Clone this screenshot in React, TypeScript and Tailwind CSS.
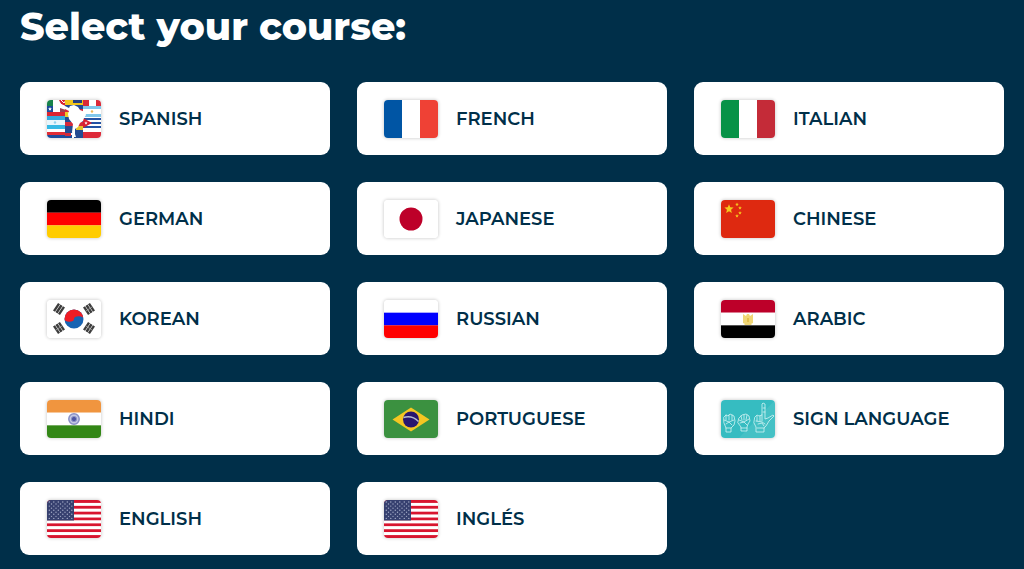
import React from 'react';

const Stripes = ({ colors, vertical }: { colors: string[]; vertical?: boolean }) => {
  const size = (vertical ? 54 : 38) / colors.length;
  return (
    <>
      {colors.map((color, i) =>
        vertical ? (
          <rect key={i} x={i * size} width={size + 0.1} height="38" fill={color} />
        ) : (
          <rect key={i} y={i * size} width="54" height={size + 0.1} fill={color} />
        )
      )}
    </>
  );
};

const starPoints = (cx: number, cy: number, r: number) =>
  Array.from({ length: 10 }, (_, i) => {
    const radius = i % 2 === 0 ? r : r * 0.45;
    const angle = (Math.PI * i) / 5 - Math.PI / 2;
    return `${cx + radius * Math.cos(angle)},${cy + radius * Math.sin(angle)}`;
  }).join(' ');

const LatinAmerica = () => (
  <>
    <rect width="54" height="38" fill="#fff" />
    {/* Mexico, Chile, Dominican Republic */}
    <rect width="6" height="6" fill="#17834b" />
    <rect y="6" width="6" height="6" fill="#1c4c9c" />
    <polygon points={starPoints(3, 9, 2)} fill="#fff" />
    <path d="M12 0h7v6l-4-1-3-3z" fill="#d92231" />
    <path d="M14 0l3 3 2-3M13 4l4 2" stroke="#fff" strokeWidth="1" fill="none" />
    <path d="M13 8l6 2v2h-6z" fill="#9a4352" />
    {/* Central America */}
    <rect y="12" width="19" height="4" fill="#da2532" />
    <rect y="16" width="19" height="4" fill="#35a9df" />
    <rect y="20" width="19" height="5" fill="#e8f6fc" />
    <rect y="25" width="19" height="4" fill="#35b9e5" />
    <rect y="29" width="19" height="3" fill="#fff" />
    <rect y="32" width="19" height="3" fill="#e02c35" />
    <rect y="35" width="25" height="3" fill="#1c4c9c" />
    <circle cx="8" cy="22.500" r="1.200" fill="#8fd1ee" />
    {/* Colombia, Venezuela, Ecuador */}
    <rect x="18" width="18" height="6" fill="#f2c51d" />
    <rect x="26" width="9" height="3" fill="#243f82" />
    <rect x="18" y="5" width="18" height="4" fill="#234a97" />
    <rect x="18" y="9" width="18" height="3" fill="#d5283b" />
    <rect x="18" y="12" width="18" height="5" fill="#edcb29" />
    <rect x="18" y="17" width="18" height="5" fill="#244b91" />
    <rect x="18" y="22" width="18" height="4" fill="#d32a3b" />
    <rect x="18" y="26" width="18" height="7" fill="#244b91" />
    <rect x="29" y="26" width="7" height="4" fill="#e3c42d" />
    <rect x="27" y="31" width="9" height="7" fill="#244b91" />
    <rect x="18" y="33" width="6" height="3" fill="#d32a3b" />
    {/* Peru, Argentina, Cuba, Uruguay */}
    <rect x="36" width="6" height="6" fill="#db2938" />
    <rect x="49" width="5" height="6" fill="#db2938" />
    <rect x="36" y="6" width="18" height="3" fill="#80c7eb" />
    <rect x="36" y="14" width="18" height="3" fill="#80c7eb" />
    <circle cx="45" cy="11.500" r="1.200" fill="#e9b657" />
    <path d="M36 19h18M36 23h18M36 27h18" stroke="#2453a4" strokeWidth="2" />
    <rect x="36" y="32" width="18" height="6" fill="#dd2938" />
    <path d="M36 18l9 5-9 5z" fill="#d81f32" />
    <polygon points={starPoints(39, 23, 1.7)} fill="#fff" />
    {/* continent */}
    <polygon
      points="6,0 12,0 14,4 18,6 22,8 23,6 27,5 31,7 33,10 38,12 39,15 37,18 36,21 33,23 31,27 28,29 28,34 29,37 26,37 25,32 26,24 22,19 21,14 22,11 18,9 13,6"
      fill="#fff"
    />
  </>
);

const Korea = () => (
  <>
    <rect width="54" height="38" fill="#fff" />
    <g transform="translate(27 19)">
      <circle r="9.500" fill="#1763b2" />
      <path d="M-9.500 0A9.500 9.500 0 0 1 9.500 0A4.750 2.800 0 0 0 0 0A4.750 2.800 0 0 1 -9.500 0z" fill="#ee1c25" />
    </g>
    {[
      [12, 9, -56],
      [42, 9, 56],
      [12, 28, 56],
      [42, 28, -56],
    ].map(([x, y, angle], i) => (
      <g key={i} transform={`translate(${x} ${y}) rotate(${angle})`} stroke="#3d3d3d" strokeWidth="2.400">
        <path d="M-4.500 -3h9M-4.500 0h9M-4.500 3h9" />
        {i > 0 && <path d="M0 -4v8" stroke="#aaa" strokeWidth="0.700" />}
      </g>
    ))}
  </>
);

const Hands = () => (
  <>
    <rect width="54" height="38" fill="#36bcc1" />
    <path d="M54 0v38H18z" fill="#fff" opacity="0.080" />
    <g fill="none" stroke="#d3f4f4" strokeWidth="0.800" strokeLinejoin="round" strokeLinecap="round">
      <path d="M3 17l2-2 2 1 2-2 2 1 2 1 1 5-1 4-3 3v4H5v-4l-2-5zM5 15v5M8 15v5M11 15v5M3 20l5 2 5-2M5 24l3-2 3 3M5 28h5" />
      <path d="M18 18l3-3 4-1 3 2 1 5-2 3-1 3v4h-6v-4l-3-4zM20 16l1 4M23 15v5M26 15l-1 5M18 20l5 2 5-3M19 23l4-1 3 3M20 28h6" />
      <path d="M34 17l2-2 2 1 3-1V4l1-1 2 1 0 15 3-1 5-3 1 1-5 5-3 5-2 2v4h-8v-5l-2-4zM36 16v5M39 16v5M41 15v6M35 21l6 1 3 2M37 24l4-1 2 3M36 28h7M42 8h2M42 12h2" />
    </g>
  </>
);

const Usa = () => (
  <>
    <Stripes colors={Array.from({ length: 13 }, (_, i) => (i % 2 === 0 ? '#d8152f' : '#fff'))} />
    <rect width="27" height="20.500" fill="#36406f" />
    {Array.from({ length: 9 }, (_, row) =>
      Array.from({ length: row % 2 === 0 ? 6 : 5 }, (_, col) => (
        <circle
          key={`${row}-${col}`}
          cx={(row % 2 === 0 ? 2.3 : 4.5) + col * 4.5}
          cy={2 + row * 2.05}
          r="0.700"
          fill="#a3aac6"
        />
      ))
    )}
  </>
);

const courses: { name: string; flag: React.ReactNode }[] = [
  { name: 'SPANISH', flag: <LatinAmerica /> },
  { name: 'FRENCH', flag: <Stripes vertical colors={['#0055a4', '#fff', '#ef4135']} /> },
  { name: 'ITALIAN', flag: <Stripes vertical colors={['#079247', '#fff', '#c42b38']} /> },
  { name: 'GERMAN', flag: <Stripes colors={['#000', '#f00', '#fc0']} /> },
  {
    name: 'JAPANESE',
    flag: (
      <>
        <rect width="54" height="38" fill="#fff" />
        <circle cx="27" cy="19" r="11.500" fill="#bd0029" />
      </>
    ),
  },
  {
    name: 'CHINESE',
    flag: (
      <>
        <rect width="54" height="38" fill="#de2910" />
        <g fill="#f6c71e">
          <polygon points={starPoints(8, 9, 4.8)} />
          <polygon points={starPoints(16, 4.5, 1.9)} />
          <polygon points={starPoints(19, 8, 1.9)} />
          <polygon points={starPoints(19, 13, 1.9)} />
          <polygon points={starPoints(16, 16, 1.9)} />
        </g>
      </>
    ),
  },
  { name: 'KOREAN', flag: <Korea /> },
  { name: 'RUSSIAN', flag: <Stripes colors={['#fff', '#00f', '#f00']} /> },
  {
    name: 'ARABIC',
    flag: (
      <>
        <Stripes colors={['#bd0029', '#fff', '#000']} />
        <path d="M22 14l3 2 1-2h2l1 2 3-2v9l-2 1 1 1h-8l1-1-2-1z" fill="#f0d676" />
        <path d="M26 18h2v4h-2z" fill="#e3bf4c" />
      </>
    ),
  },
  {
    name: 'HINDI',
    flag: (
      <>
        <Stripes colors={['#f0953f', '#fff', '#338716']} />
        <circle cx="27" cy="19" r="5.200" fill="#c3c8e3" stroke="#8990c6" strokeWidth="1.500" />
        <circle cx="27" cy="19" r="2.600" fill="#4d56a3" stroke="#8c93c8" />
      </>
    ),
  },
  {
    name: 'PORTUGUESE',
    flag: (
      <>
        <rect width="54" height="38" fill="#3b9140" />
        <path d="M8.500 19.500L27 7.500 45.500 19.500 27 31.500z" fill="#f5c622" />
        <circle cx="27" cy="19.500" r="8" fill="#28166f" />
        <path d="M19.500 17.500c5-1.500 11 0 15 4" fill="none" stroke="#b5bccb" strokeWidth="1.500" />
      </>
    ),
  },
  { name: 'SIGN LANGUAGE', flag: <Hands /> },
  { name: 'ENGLISH', flag: <Usa /> },
  { name: 'INGLÉS', flag: <Usa /> },
];

export default function App() {
  return (
    <main className="min-h-screen bg-[#002f49] px-5 pt-1 pb-3 font-[Montserrat,Inter,sans-serif]">
      <h1 className="text-[38px] leading-[46px] font-extrabold text-white">Select your course:</h1>

      <div className="mt-8 grid grid-cols-3 gap-[27px]">
        {courses.map((course) => (
          <a
            key={course.name}
            href="#"
            className="flex h-[73px] items-center gap-[18px] rounded-[9px] bg-white pl-[27px] text-lg font-semibold text-[#002f49]"
          >
            <svg
              viewBox="0 0 54 38"
              aria-hidden="true"
              className="h-[38px] w-[54px] shrink-0 rounded shadow-[0_0_3px_1px_rgba(0,0,0,0.15)]"
            >
              {course.flag}
            </svg>
            {course.name}
          </a>
        ))}
      </div>
    </main>
  );
}
